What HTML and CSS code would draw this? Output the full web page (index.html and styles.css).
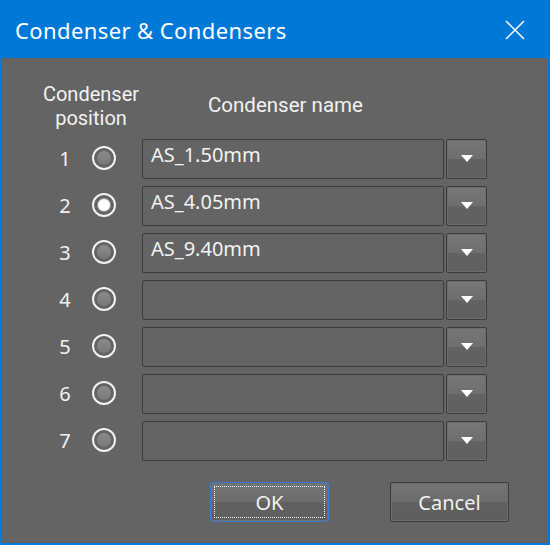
FILE: index.html
```html
<!DOCTYPE html>
<html>
<head>
<meta charset="utf-8">
<link rel="stylesheet" href="styles.css">
</head>
<body>
<div class="window">
  <div class="titlebar">
    <span class="title">Condenser &amp; Condensers</span>
    <svg class="close" width="20" height="20" viewBox="0 0 20 20"><path d="M1 1 L19 19 M19 1 L1 19" stroke="#ffffff" stroke-width="1.5" fill="none"/></svg>
  </div>
  <div class="content">
    <div class="header">
      <div class="h-pos"><div class="h-line">Condenser</div><div class="h-line">position</div></div>
      <div class="h-name">Condenser name</div>
    </div>
    <div class="rows">
      <div class="row"><span class="num">1</span><span class="radio"></span><div class="combo"><div class="field">AS_1.50mm</div><div class="drop"><span class="arrow"></span></div></div></div>
      <div class="row"><span class="num">2</span><span class="radio checked"></span><div class="combo"><div class="field">AS_4.05mm</div><div class="drop"><span class="arrow"></span></div></div></div>
      <div class="row"><span class="num">3</span><span class="radio"></span><div class="combo"><div class="field">AS_9.40mm</div><div class="drop"><span class="arrow"></span></div></div></div>
      <div class="row"><span class="num">4</span><span class="radio"></span><div class="combo"><div class="field"></div><div class="drop"><span class="arrow"></span></div></div></div>
      <div class="row"><span class="num">5</span><span class="radio"></span><div class="combo"><div class="field"></div><div class="drop"><span class="arrow"></span></div></div></div>
      <div class="row"><span class="num">6</span><span class="radio"></span><div class="combo"><div class="field"></div><div class="drop"><span class="arrow"></span></div></div></div>
      <div class="row"><span class="num">7</span><span class="radio"></span><div class="combo"><div class="field"></div><div class="drop"><span class="arrow"></span></div></div></div>
    </div>
    <div class="buttons">
      <div class="btn ok"><span class="focus">OK</span></div>
      <div class="btn cancel">Cancel</div>
    </div>
  </div>
</div>
</body>
</html>
```
FILE: styles.css
```css
html, body {
  margin: 0;
  padding: 0;
  background: #0078d7;
}
body {
  font-family: "Noto Sans", "Open Sans", sans-serif;
  color: #f2f2f2;
}
.window {
  width: 550px;
  height: 545px;
  box-sizing: border-box;
  background: #0078d7;
  padding: 0 2px 2px 1px;
  display: flex;
  flex-direction: column;
}
.titlebar {
  height: 58px;
  flex: none;
  display: flex;
  align-items: center;
  justify-content: space-between;
  padding: 0 23px 0 14px;
  color: #ffffff;
}
.title {
  font-size: 22px;
  letter-spacing: 0.4px;
  margin-top: 1px;
}
.close {
  margin-top: 1px;
}
.content {
  flex: 1;
  background: #646464;
  padding: 20px 0 0 0;
}
.header {
  display: flex;
  align-items: flex-start;
  height: 61px;
  box-sizing: border-box;
  padding-top: 4px;
  font-family: Roboto, "Noto Sans", sans-serif;
  font-size: 20px;
  line-height: 24px;
}
.h-pos {
  width: 180px;
  text-align: center;
  display: flex;
  flex-direction: column;
}
.h-line {
  height: 24px;
}
.h-name {
  margin-left: 27px;
  margin-top: 11px;
  white-space: nowrap;
  font-size: 20.5px;
}
.rows {
  display: flex;
  flex-direction: column;
  gap: 7px;
}
.row {
  display: flex;
  align-items: center;
  height: 40px;
}
.num {
  width: 28px;
  margin-left: 50px;
  margin-top: -1px;
  text-align: center;
  font-size: 20px;
}
.radio {
  width: 24px;
  height: 24px;
  box-sizing: border-box;
  border: 2px solid #f2f2f2;
  border-radius: 50%;
  margin-left: 13px;
  margin-top: -2px;
  display: flex;
  align-items: center;
  justify-content: center;
}
.radio::after {
  content: "";
  width: 14px;
  height: 14px;
  border-radius: 50%;
  background: linear-gradient(#8c8c8c, #787878);
}
.radio.checked::after {
  width: 12px;
  height: 12px;
  background: #ffffff;
  box-shadow: 0 0 0 1px #9a9a9a;
}
.combo {
  display: flex;
  margin-left: 26px;
  height: 40px;
}
.field {
  width: 302px;
  height: 40px;
  box-sizing: border-box;
  border: 1px solid #3c3c3c;
  border-radius: 2px;
  font-size: 20px;
  padding: 1px 0 0 8px;
  white-space: nowrap;
}
.drop {
  width: 41px;
  height: 40px;
  box-sizing: border-box;
  margin-left: 2px;
  border: 1px solid #3c3c3c;
  border-radius: 2px;
  background: linear-gradient(#777777, #6e6e6e 50%, #626262 51%, #606060);
  box-shadow: inset 0 0 0 1px #6c6c6c;
  display: flex;
  align-items: center;
  justify-content: center;
}
.arrow {
  width: 0;
  height: 0;
  margin-top: -2px;
  border-left: 6.5px solid transparent;
  border-right: 6.5px solid transparent;
  border-top: 7px solid #ffffff;
}
.buttons {
  display: flex;
  margin-top: 21px;
  padding-left: 209px;
  gap: 61px;
}
.btn {
  width: 119px;
  height: 40px;
  box-sizing: border-box;
  border: 1px solid #3c3c3c;
  border-radius: 2px;
  background: linear-gradient(#747474, #6c6c6c 50%, #616161 51%, #5e5e5e);
  box-shadow: inset 0 0 0 1px #6e6e6e;
  display: flex;
  align-items: center;
  justify-content: center;
  font-size: 20px;
}
.btn.ok {
  border-color: #3a7bd5;
  padding: 3px;
}
.focus {
  flex: 1;
  align-self: stretch;
  border: 1px dotted #ffffff;
  display: flex;
  align-items: center;
  justify-content: center;
}
```
